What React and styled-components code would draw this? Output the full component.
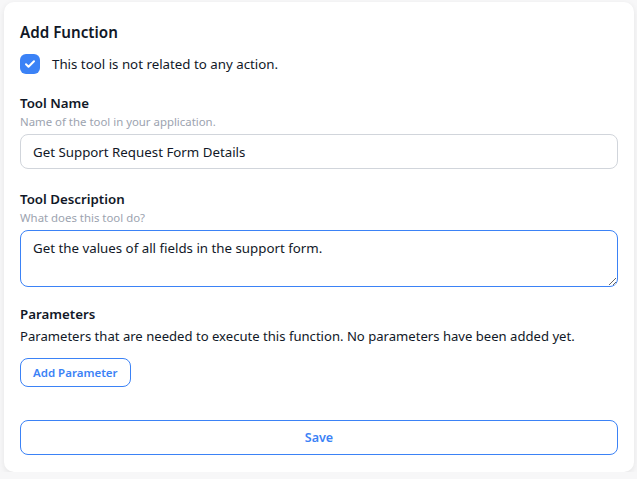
import React, { useState } from 'react'
import styled, { createGlobalStyle } from "styled-components";

const Global = createGlobalStyle`
  html, body {
    margin: 0;
    background: #f7f7f8;
    font-family: "Noto Sans", "Open Sans", sans-serif;
    color: #111827;
  }
  * { box-sizing: border-box; }
`;

const Page = styled.div`
  padding: 2px 3px 0 4px;
`;
const Card = styled.div`
  background: #fff;
  border-radius: 10px;
  box-shadow: 0 2px 6px rgba(0, 0, 0, 0.08);
  padding: 20px 16px 17px 16px;
  display: flex;
  flex-direction: column;
`;
const Heading = styled.h2`
  margin: 0;
  font-size: 15.2px;
  font-weight: 600;
  line-height: 20px;
`;
const CheckRow = styled.label`
  display: flex;
  align-items: center;
  gap: 12px;
  margin-top: 12px;
  font-size: 13.3px;
  line-height: 20px;
`;
const Box = styled.span`
  width: 20px;
  height: 20px;
  border-radius: 6px;
  background: ${p => (p.checked ? "#3b82f6" : "#fff")};
  border: ${p => (p.checked ? "none" : "1px solid #d1d5db")};
  display: flex;
  align-items: center;
  justify-content: center;
`;
const Field = styled.div`
  display: flex;
  flex-direction: column;
  margin-top: ${p => p.top || 0}px;
`;
const Label = styled.div`
  font-size: 13.3px;
  font-weight: 600;
  line-height: 20px;
`;
const Hint = styled.div`
  font-size: 11.4px;
  color: #9ca3af;
  line-height: 16px;
  margin: 1px 0 4px;
`;
const Input = styled.input`
  width: 100%;
  height: 35px;
  border: 1px solid #d1d5db;
  border-radius: 8px;
  padding: 0 12px;
  font-family: inherit;
  font-size: 13.3px;
  color: #111827;
  outline: none;
`;
const TextArea = styled.textarea`
  width: 100%;
  height: 57px;
  border: 1px solid #3b82f6;
  border-radius: 8px;
  padding: 7px 12px;
  font-family: inherit;
  font-size: 13.3px;
  line-height: 20px;
  color: #111827;
  outline: none;
  resize: vertical;
  display: block;
`;
const Text = styled.p`
  margin: 2px 0 0;
  font-size: 13.1px;
  line-height: 20px;
`;
const OutlineButton = styled.button`
  font-family: inherit;
  background: #fff;
  color: #3b82f6;
  border: 1px solid #3b82f6;
  border-radius: 8px;
  cursor: pointer;
  font-weight: 600;
  font-size: ${p => (p.wide ? "12.5px" : "11.5px")};
  height: ${p => (p.wide ? "35px" : "29px")};
  width: ${p => (p.wide ? "100%" : "auto")};
  padding: 0 12px;
  align-self: flex-start;
`;

export default function App() {
  const [checked, setChecked] = useState(true);
  const [name, setName] = useState("Get Support Request Form Details");
  const [desc, setDesc] = useState("Get the values of all fields in the support form.");

  return (
    <Page>
      <Global />
      <Card>
        <Heading>Add Function</Heading>
        <CheckRow onClick={() => setChecked(!checked)}>
          <Box checked={checked}>
            {checked && (
              <svg width="12" height="12" viewBox="0 0 24 24" fill="none" stroke="#fff" strokeWidth="4" strokeLinecap="round" strokeLinejoin="round">
                <path d="M4 12.5l5 5L20 6.5" />
              </svg>
            )}
          </Box>
          This tool is not related to any action.
        </CheckRow>

        <Field top={19}>
          <Label>Tool Name</Label>
          <Hint>Name of the tool in your application.</Hint>
          <Input value={name} onChange={e => setName(e.target.value)} />
        </Field>

        <Field top={20}>
          <Label>Tool Description</Label>
          <Hint>What does this tool do?</Hint>
          <TextArea value={desc} onChange={e => setDesc(e.target.value)} />
        </Field>

        <Field top={17}>
          <Label>Parameters</Label>
          <Text>Parameters that are needed to execute this function. No parameters have been added yet.</Text>
          <div style={{ marginTop: 12 }}>
            <OutlineButton type="button">Add Parameter</OutlineButton>
          </div>
        </Field>

        <Field top={33}>
          <OutlineButton wide type="button">Save</OutlineButton>
        </Field>
      </Card>
    </Page>
  );
}
